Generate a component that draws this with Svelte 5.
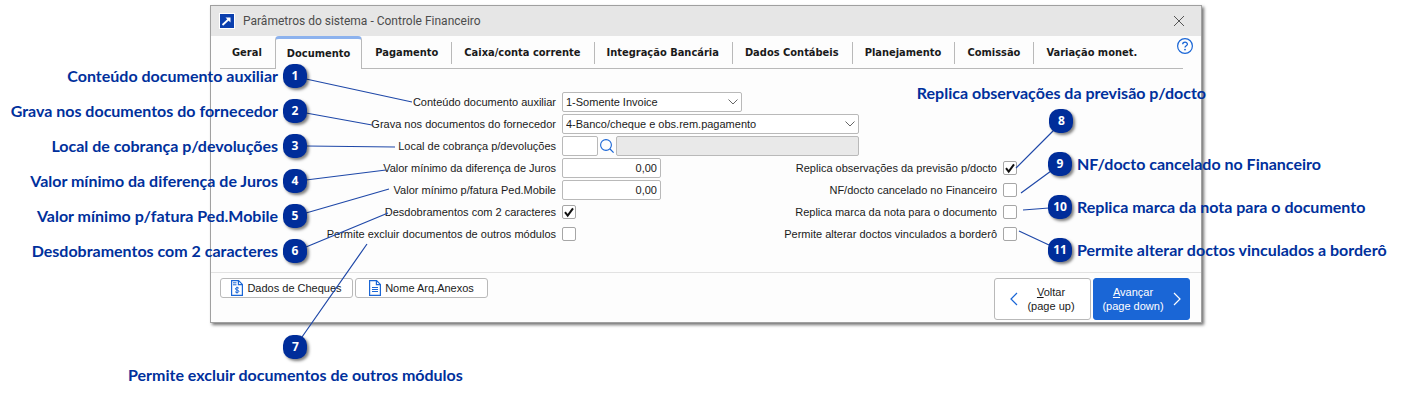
<script>
  const tabs = [
    'Geral',
    'Documento',
    'Pagamento',
    'Caixa/conta corrente',
    'Integração Bancária',
    'Dados Contábeis',
    'Planejamento',
    'Comissão',
    'Variação monet.'
  ];

  const leftNotes = [
    'Conteúdo documento auxiliar',
    'Grava nos documentos do fornecedor',
    'Local de cobrança p/devoluções',
    'Valor mínimo da diferença de Juros',
    'Valor mínimo p/fatura Ped.Mobile',
    'Desdobramentos com 2 caracteres'
  ];

  const rightNotes = [
    'NF/docto cancelado no Financeiro',
    'Replica marca da nota para o documento',
    'Permite alterar doctos vinculados a borderô'
  ];

  let active = $state('Documento');
  let content = $state('1');
  let record = $state('4');
  let place = $state('');
  let interest = $state('0,00');
  let invoice = $state('0,00');
  let split = $state(true);
  let remove = $state(false);

  let options = $state([
    { id: 'replica-obs', label: 'Replica observações da previsão p/docto', checked: true },
    { id: 'nf-cancelado', label: 'NF/docto cancelado no Financeiro', checked: false },
    { id: 'replica-marca', label: 'Replica marca da nota para o documento', checked: false },
    { id: 'altera-borde', label: 'Permite alterar doctos vinculados a borderô', checked: false }
  ]);
</script>

{#snippet chevron()}
  <svg class="chevron" width="10" height="6" viewBox="0 0 10 6" fill="none" aria-hidden="true">
    <path d="M0.5 0.5L5 5L9.5 0.5" stroke="currentColor" />
  </svg>
{/snippet}

<div class="page">
  <section class="window" aria-label="Controle Financeiro">
    <header class="titlebar">
      <svg width="16" height="16" viewBox="0 0 16 16" fill="none" aria-hidden="true">
        <rect x="0.5" y="0.5" width="15" height="15" fill="#0a3fae" stroke="#fff" />
        <path d="M3.5 12L10.5 5.5" stroke="#fff" stroke-width="1.8" />
        <path d="M6.5 4.5H11.5V9.5Z" fill="#fff" />
      </svg>
      <h1>Parâmetros do sistema - Controle Financeiro</h1>
      <button class="close" aria-label="Fechar">
        <svg width="12" height="12" viewBox="0 0 12 12" fill="none">
          <path d="M1 1L11 11M11 1L1 11" stroke="currentColor" />
        </svg>
      </button>
    </header>

    <nav class="tabs">
      {#each tabs as tab}
        <button class="tab" class:active={active === tab} onclick={() => (active = tab)}>{tab}</button>
      {/each}
      <button class="help" aria-label="Ajuda">
        <svg width="16" height="16" viewBox="0 0 16 16" fill="none">
          <circle cx="8" cy="8" r="7.4" stroke="currentColor" stroke-width="1.2" />
          <path d="M5.7 6.3C5.7 3.5 10.4 3.5 10.4 6.2C10.4 7.9 8 7.7 8 9.6" stroke="currentColor" stroke-width="1.3" />
          <circle cx="8" cy="11.6" r="0.9" fill="currentColor" />
        </svg>
      </button>
    </nav>

    <form class="fields" onsubmit={(e) => e.preventDefault()}>
      <div class="main">
        <label for="conteudo">Conteúdo documento auxiliar</label>
        <div class="select short">
          <select id="conteudo" bind:value={content}>
            <option value="1">1-Somente Invoice</option>
          </select>
          {@render chevron()}
        </div>

        <label for="grava">Grava nos documentos do fornecedor</label>
        <div class="select">
          <select id="grava" bind:value={record}>
            <option value="4">4-Banco/cheque e obs.rem.pagamento</option>
          </select>
          {@render chevron()}
        </div>

        <label for="local">Local de cobrança p/devoluções</label>
        <div class="lookup">
          <input id="local" class="code" type="text" bind:value={place} />
          <button type="button" aria-label="Pesquisar">
            <svg width="14" height="14" viewBox="0 0 14 14" fill="none">
              <circle cx="6" cy="6" r="5.4" stroke="currentColor" stroke-width="1.1" />
              <path d="M10 10L13.6 13.6" stroke="currentColor" stroke-width="1.2" />
            </svg>
          </button>
          <input class="name" type="text" aria-label="Nome do local" disabled />
        </div>

        <label for="juros">Valor mínimo da diferença de Juros</label>
        <input id="juros" class="amount" type="text" bind:value={interest} />

        <label for="fatura">Valor mínimo p/fatura Ped.Mobile</label>
        <input id="fatura" class="amount" type="text" bind:value={invoice} />

        <label for="desdobra">Desdobramentos com 2 caracteres</label>
        <span class="check">
          <input id="desdobra" type="checkbox" bind:checked={split} />
          <svg viewBox="0 0 14 14" fill="none" aria-hidden="true"><path d="M3 7.2L5.7 10.6L11 3.4" /></svg>
        </span>

        <label for="excluir">Permite excluir documentos de outros módulos</label>
        <span class="check">
          <input id="excluir" type="checkbox" bind:checked={remove} />
          <svg viewBox="0 0 14 14" fill="none" aria-hidden="true"><path d="M3 7.2L5.7 10.6L11 3.4" /></svg>
        </span>
      </div>

      <div class="side">
        {#each options as option}
          <label for={option.id}>{option.label}</label>
          <span class="check">
            <input id={option.id} type="checkbox" bind:checked={option.checked} />
            <svg viewBox="0 0 14 14" fill="none" aria-hidden="true"><path d="M3 7.2L5.7 10.6L11 3.4" /></svg>
          </span>
        {/each}
      </div>
    </form>

    <footer class="actions">
      <button class="small">
        <svg width="12" height="16" viewBox="0 0 12 16" fill="none" aria-hidden="true">
          <path d="M0.6 0.6H7.6L11.4 4.4V15.4H0.6V0.6ZM7.4 0.8V4.6H11.2" stroke="currentColor" stroke-width="1.2" />
          <path d="M2 2.8H5.5M2 4.8H5.5" stroke="currentColor" />
          <path d="M7.9 8.3C7.3 7.3 4.4 7.3 4.4 8.9C4.4 10.5 7.9 9.6 7.9 11.3C7.9 12.9 4.8 12.8 4.1 11.7M6 6.7V13.6" stroke="currentColor" />
        </svg>
        Dados de Cheques
      </button>
      <button class="small">
        <svg width="12" height="16" viewBox="0 0 12 16" fill="none" aria-hidden="true">
          <path d="M0.6 0.6H7.6L11.4 4.4V15.4H0.6V0.6ZM7.4 0.8V4.6H11.2" stroke="currentColor" stroke-width="1.2" />
          <path d="M3 7.5H9M3 9.5H9M3 11.5H9" stroke="currentColor" />
        </svg>
        Nome Arq.Anexos
      </button>
      <button class="step back">
        <svg width="8" height="14" viewBox="0 0 8 14" fill="none" aria-hidden="true">
          <path d="M7 1L1 7L7 13" stroke="currentColor" stroke-width="1.2" />
        </svg>
        <span><u>V</u>oltar<br />(page up)</span>
      </button>
      <button class="step next">
        <span><u>A</u>vançar<br />(page down)</span>
        <svg width="8" height="14" viewBox="0 0 8 14" fill="none" aria-hidden="true">
          <path d="M1 1L7 7L1 13" stroke="currentColor" stroke-width="1.2" />
        </svg>
      </button>
    </footer>
  </section>

  <!-- leader lines, one drawing per side so each follows its own edge -->
  <svg class="lines left" width="420" height="345" aria-hidden="true">
    <path d="M306 79L412 102M306 113L372 125M306 146L395 147M306 180L386 170M306 213L389 189M306 247L388 213M302 337L367 244" />
  </svg>
  <svg class="lines right" width="402" height="260" aria-hidden="true">
    <path d="M16 168L54 130M21 193L51 171M23 210L49 208M19 231L49 245" />
  </svg>

  <ol class="notes left">
    {#each leftNotes as note, i}
      <li>{note}<b>{i + 1}</b></li>
    {/each}
  </ol>
  <div class="note bottom">
    <b>7</b>
    Permite excluir documentos de outros módulos
  </div>
  <div class="note top">
    Replica observações da previsão p/docto
    <b>8</b>
  </div>
  <ol class="notes right">
    {#each rightNotes as note, i}
      <li><b>{i + 9}</b>{note}</li>
    {/each}
  </ol>
</div>

<style>
  :global(body) {
    background: #fff;
  }

  .page {
    --ui: 'Liberation Sans', Arial, sans-serif;
    --tab: 'DejaVu Sans Condensed', Tahoma, sans-serif;
    --note: #00309c;
    --blue: #1a66d6;
    --line: #b9b9b9;
    position: relative;
    box-sizing: border-box;
    min-height: 100vh;
    padding: 5px 200px 0 210px;
    overflow: hidden;
    font: 11px/16px var(--ui);
    color: #1a1a1a;
  }

  .window {
    border: 1px solid #a0a0a0;
    background: #fdfdfd;
    box-shadow: 2px 2px 3px rgba(0, 0, 0, 0.55);
  }

  button,
  input,
  select {
    box-sizing: border-box;
    margin: 0;
    font: inherit;
    color: inherit;
  }

  button {
    padding: 0;
    border: 0;
    background: none;
  }

  svg {
    display: block;
    flex-shrink: 0;
  }

  .titlebar {
    display: flex;
    align-items: center;
    gap: 8px;
    height: 30px;
    padding: 0 16px 0 8px;
    background: #e6e6e6;
  }

  h1 {
    margin: 0;
    font: 12px/16px Roboto, 'Segoe UI', sans-serif;
    color: #4c4c4c;
  }

  .close {
    margin-left: auto;
    color: #555;
  }

  .tabs {
    position: relative;
    display: flex;
    align-items: center;
    height: 33px;
    margin: 0 18px 0 9px;
    box-shadow: inset 0 -1px var(--line);
  }

  .tab {
    height: 22px;
    padding: 1px 13px 0 12px;
    border-left: 1px solid var(--line);
    font: bold 11px/20px var(--tab);
    white-space: nowrap;
  }

  .tab:first-child {
    border-left: 0;
  }

  .tab.active + .tab {
    border-left-color: transparent;
  }

  .tab.active {
    height: 33px;
    padding: 0 11px;
    border: 1px solid var(--line);
    border-top: 3px solid #8cb2ee;
    border-bottom: 0;
    border-radius: 4px 4px 0 0;
    background: #fdfdfd;
  }

  .help {
    position: absolute;
    top: 2px;
    right: -10px;
    color: var(--blue);
  }

  .fields {
    display: grid;
    padding: 22px 184px 27px 0;
    border-bottom: 1px solid #e2e2e2;
  }

  .main,
  .side {
    grid-area: 1 / 1;
    display: grid;
    grid-auto-rows: 22px;
    align-items: center;
    column-gap: 6px;
  }

  .main {
    grid-template-columns: 345px 297px;
    justify-self: start;
  }

  .side {
    grid-template-columns: auto 14px;
    place-self: end;
  }

  label {
    text-align: right;
    white-space: nowrap;
  }

  .select {
    position: relative;
  }

  .short {
    width: 180px;
  }

  select,
  input[type='text'] {
    height: 20px;
    padding: 0 3px;
    border: 1px solid var(--line);
    border-radius: 2px;
    background: #fff;
  }

  select {
    display: block;
    width: 100%;
    appearance: none;
  }

  .chevron {
    position: absolute;
    top: 7px;
    right: 4px;
    color: #666;
    pointer-events: none;
  }

  .lookup {
    display: flex;
    align-items: center;
    gap: 2px;
  }

  .lookup button {
    color: var(--blue);
  }

  .code {
    width: 36px;
  }

  .lookup .name {
    flex: 1;
    min-width: 0;
    background: #e9e9e9;
  }

  .amount {
    width: 99px;
    text-align: right;
  }

  .check {
    position: relative;
    width: 14px;
    height: 14px;
  }

  .check input {
    display: block;
    width: 14px;
    height: 14px;
    border: 1px solid #a6a6a6;
    border-radius: 2px;
    background: #fff;
    appearance: none;
  }

  .check svg {
    position: absolute;
    inset: 0;
    visibility: hidden;
    stroke: #111;
    stroke-width: 2;
    pointer-events: none;
  }

  .check input:checked + svg {
    visibility: visible;
  }

  .actions {
    display: flex;
    align-items: flex-start;
    gap: 2px;
    padding: 5px 11px 2px 9px;
  }

  .small,
  .step {
    display: flex;
    justify-content: center;
    align-items: center;
    border: 1px solid var(--line);
    border-radius: 3px;
    background: #fff;
  }

  .small {
    gap: 4px;
    width: 133px;
    height: 20px;
  }

  .small svg,
  .back svg {
    color: var(--blue);
  }

  .step {
    gap: 9px;
    width: 97px;
    height: 42px;
    line-height: 14px;
  }

  .back {
    margin-left: auto;
  }

  .next {
    border-color: var(--blue);
    background: var(--blue);
    color: #fff;
  }

  .lines {
    position: absolute;
    top: 0;
    fill: none;
    stroke: #1f48a8;
    stroke-width: 1.2;
    pointer-events: none;
  }

  .lines.left {
    left: 0;
  }

  .lines.right {
    right: 0;
  }

  .notes,
  .note {
    position: absolute;
    display: flex;
    flex-direction: column;
    margin: 0;
    padding: 0;
    list-style: none;
    font: bold 16px/24px Lato, Calibri, sans-serif;
    color: var(--note);
    white-space: nowrap;
    pointer-events: none;
  }

  .notes li {
    display: flex;
    gap: 5px;
  }

  .notes.left {
    top: 64px;
    left: 0;
    width: 307px;
    gap: 11px;
  }

  .notes.left li {
    justify-content: flex-end;
  }

  .notes.right {
    top: 152px;
    left: calc(100% - 354px);
    gap: 19px;
  }

  .note {
    align-items: center;
    gap: 4px;
  }

  .bottom {
    top: 335px;
    left: 128px;
  }

  .top {
    top: 81px;
    right: 196px;
  }

  b {
    width: 24px;
    height: 24px;
    border-radius: 10px;
    background: #002d9a;
    box-shadow: 2px 2px 3px rgba(0, 0, 0, 0.5);
    font: bold 12px/24px 'Open Sans', sans-serif;
    color: #fff;
    text-align: center;
  }
</style>
